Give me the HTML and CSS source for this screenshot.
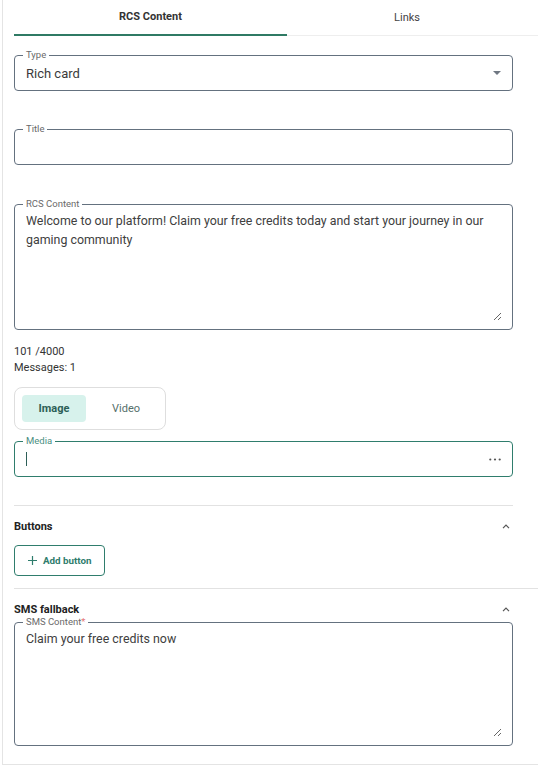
FILE: index.html
```html
<!DOCTYPE html>
<html lang="en">
<head>
<meta charset="utf-8">
<title>RCS Content</title>
<link rel="stylesheet" href="styles.css">
</head>
<body>
<div class="panel">
  <div class="tabs">
    <div class="tab active">RCS Content</div>
    <div class="tab">Links</div>
  </div>
  <div class="form">
    <div class="field field-first">
      <span class="label">Type</span>
      <div class="box select">
        <span class="value">Rich card</span>
        <svg class="caret" width="8" height="4" viewBox="0 0 8 4"><polygon points="0,0 8,0 4,4" fill="#6f7782"/></svg>
      </div>
    </div>

    <div class="field field-gap">
      <span class="label">Title</span>
      <div class="box"></div>
    </div>

    <div class="field field-gap2">
      <span class="label">RCS Content</span>
      <div class="box area area-rcs">
        <textarea class="ta">Welcome to our platform! Claim your free credits today and start your journey in our gaming community</textarea>
      </div>
    </div>

    <div class="counter">
      <div>101 /4000</div>
      <div>Messages: 1</div>
    </div>

    <div class="toggle">
      <div class="opt selected">Image</div>
      <div class="opt">Video</div>
    </div>

    <div class="field field-media">
      <span class="label label-teal">Media</span>
      <div class="box media">
        <span class="cursor"></span>
        <svg class="dots" width="12" height="3" viewBox="0 0 12 3"><circle cx="1.3" cy="1.5" r="1.1" fill="#555"/><circle cx="6" cy="1.5" r="1.1" fill="#555"/><circle cx="10.7" cy="1.5" r="1.1" fill="#555"/></svg>
      </div>
    </div>

    <div class="divider"></div>
    <div class="section-head">
      <span>Buttons</span>
      <svg class="chev" width="8" height="5" viewBox="0 0 8 5"><polyline points="1,4.2 4,1.2 7,4.2" fill="none" stroke="#555" stroke-width="1.2"/></svg>
    </div>
    <button class="add-btn" type="button">
      <svg width="9" height="9" viewBox="0 0 9 9"><path d="M4.5 0 V9 M0 4.5 H9" stroke="#2f7d6d" stroke-width="1.2"/></svg>
      <span>Add button</span>
    </button>

    <div class="divider divider-full"></div>
    <div class="section-head">
      <span>SMS fallback</span>
      <svg class="chev" width="8" height="5" viewBox="0 0 8 5"><polyline points="1,4.2 4,1.2 7,4.2" fill="none" stroke="#555" stroke-width="1.2"/></svg>
    </div>
    <div class="field">
      <span class="label">SMS Content<span class="req">*</span></span>
      <div class="box area area-sms">
        <textarea class="ta">Claim your free credits now</textarea>
      </div>
    </div>
  </div>
</div>
</body>
</html>
```

FILE: styles.css
```css
* { box-sizing: border-box; }

html, body {
  margin: 0;
  padding: 0;
  background: #ffffff;
  font-family: Roboto, "Liberation Sans", Arial, sans-serif;
  color: #333;
}

.panel {
  margin-left: 2px;
  height: 765px;
  border-left: 1px solid #e4e4e4;
  border-bottom: 1px solid #e4e4e4;
  padding-left: 11px;
  overflow: hidden;
}

.tabs {
  display: flex;
  height: 36px;
  border-bottom: 1px solid #eeeeee;
}

.tab {
  width: 240px;
  display: flex;
  align-items: center;
  justify-content: center;
  font-size: 11px;
  color: #444;
  padding-bottom: 1px;
}

.tab.active {
  width: 273px;
  font-weight: 700;
  color: #333;
  border-bottom: 2px solid #2f7a64;
  margin-bottom: -1px;
}

.form {
  width: 499px;
  padding-top: 19px;
}

.field {
  position: relative;
}

.field-gap { margin-top: 38px; }
.field-gap2 { margin-top: 39px; }

.label {
  position: absolute;
  top: -6px;
  left: 9px;
  padding: 0 3px;
  background: #fff;
  font-size: 9.5px;
  line-height: 12px;
  color: #6a6a6a;
  z-index: 1;
}

.label-teal { color: #4a8f82; }
.req { color: #e57373; }

.box {
  height: 36px;
  border: 1px solid #64717f;
  border-radius: 4px;
  padding: 0 11px;
  display: flex;
  align-items: center;
}

.select .value {
  flex: 1;
  font-size: 13px;
  color: #3a3a3a;
}

.caret { margin-right: 0; }

.area {
  display: block;
  padding: 6px 10px 8px 11px;
}

.area-rcs { height: 126px; }
.area-sms { height: 124px; }

.ta {
  display: block;
  width: 100%;
  height: 100%;
  border: 0;
  outline: none;
  padding: 0;
  margin: 0;
  resize: vertical;
  font-family: Roboto, "Liberation Sans", Arial, sans-serif;
  font-size: 12.4px;
  line-height: 19px;
  color: #404040;
  background: transparent;
}

.counter {
  margin-top: 14px;
  font-size: 11px;
  line-height: 16px;
  color: #333;
}

.toggle {
  margin-top: 11px;
  width: 152px;
  height: 43px;
  border: 1px solid #dedede;
  border-radius: 8px;
  padding: 7px;
  display: flex;
  gap: 8px;
}

.opt {
  width: 65px;
  height: 27px;
  border-radius: 4px;
  display: flex;
  align-items: center;
  justify-content: center;
  font-size: 11px;
  color: #56706b;
}

.opt.selected {
  background: #d7f2ec;
  color: #2c5f56;
  font-weight: 700;
}

.field-media { margin-top: 11px; }

.media {
  border-color: #2f7d6d;
  justify-content: space-between;
}

.cursor {
  width: 1px;
  height: 14px;
  background: #2d5f57;
}

.dots { margin-right: 0; }

.divider {
  margin-top: 28px;
  height: 1px;
  background: #e2e2e2;
}

.divider-full {
  margin-top: 12px;
  margin-right: -26px;
}

.section-head {
  display: flex;
  justify-content: space-between;
  padding-top: 13px;
  height: 40px;
  align-items: flex-start;
  font-size: 11px;
  line-height: 16px;
  font-weight: 700;
  color: #222;
}

.section-head + .field { margin-top: -7px; }

.chev { margin-top: 5px; margin-right: 3px; }

.add-btn {
  margin-top: -1px;
  display: flex;
  align-items: center;
  gap: 6px;
  width: 91px;
  height: 31px;
  padding: 0 0 0 13px;
  border: 1px solid #2f7d6d;
  border-radius: 4px;
  background: #fff;
  color: #2f7d6d;
  font-family: Roboto, "Liberation Sans", Arial, sans-serif;
  font-size: 9.8px;
  font-weight: 700;
}
```
